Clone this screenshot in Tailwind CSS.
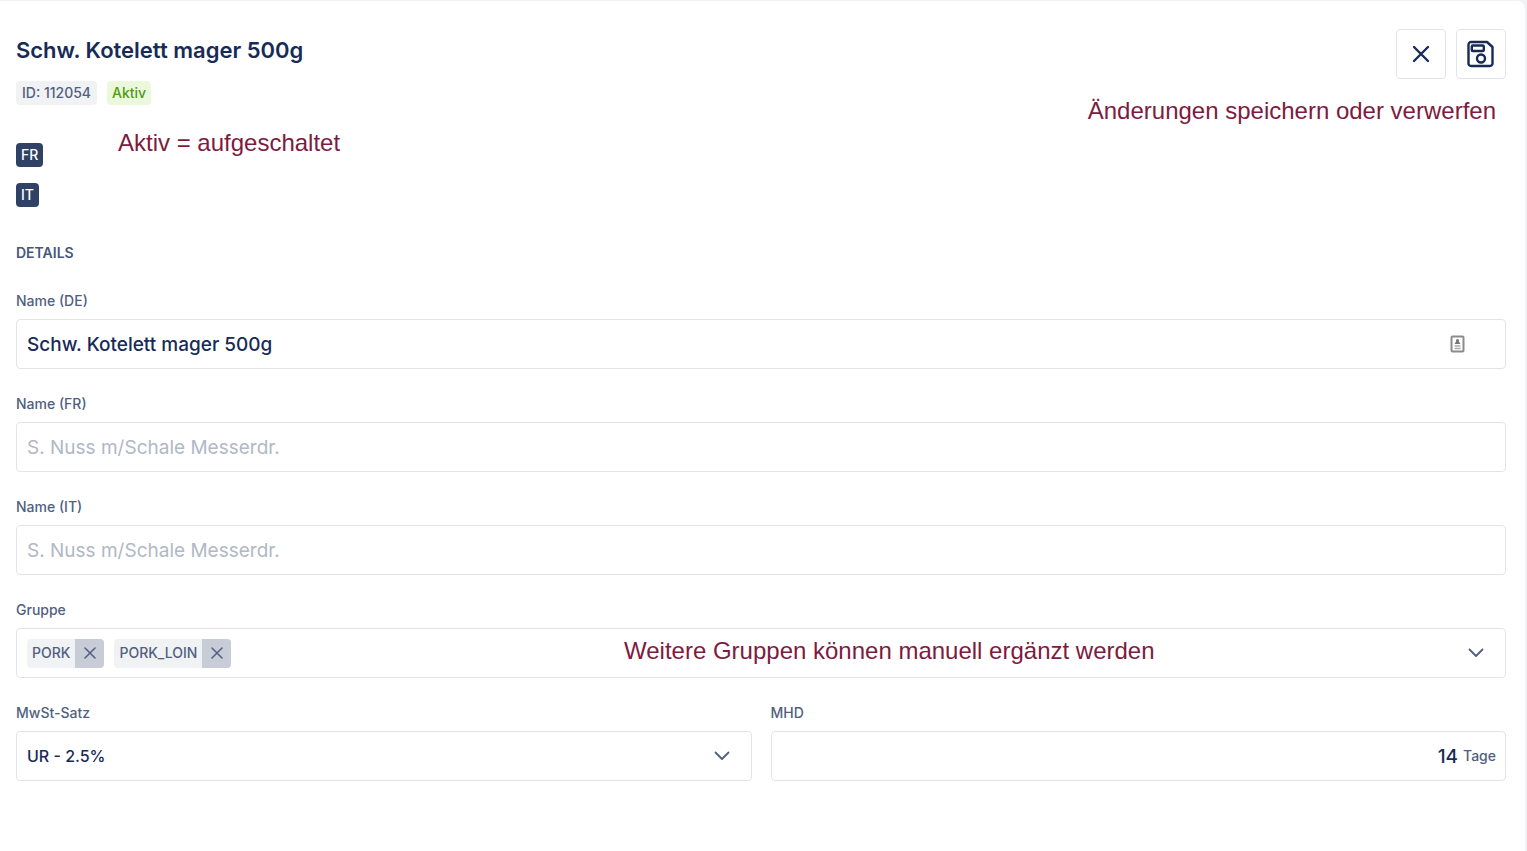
<!DOCTYPE html>
<html lang="de">
<head>
  <meta charset="UTF-8">
  <meta name="viewport" content="width=device-width, initial-scale=1.0">
  <title>Schw. Kotelett mager 500g</title>
  <script src="https://cdn.jsdelivr.net/npm/@tailwindcss/browser@4"></script>
</head>
<body class="bg-[#f1f2f4] font-['Inter',sans-serif] text-[#172b56]">
  <main class="min-h-screen bg-white mr-[2px] border-t border-[#f1f2f4] rounded-tr-lg pt-7 pb-16 pl-4 pr-[19px]">

    <header class="relative flex justify-between items-start">
      <div class="pt-2">
        <h1 class="text-[22px] leading-[26px] font-semibold">Schw. Kotelett mager 500g</h1>
        <div class="mt-[18px] flex gap-[10px] text-sm leading-6 font-medium text-[#505f7f]">
          <span class="bg-[#f1f2f4] rounded px-[6px]">ID: 112054</span>
          <span class="bg-[#ebf8dc] text-[#4f9a14] rounded px-[5px]">Aktiv</span>
        </div>
        <div class="mt-[38px] flex flex-col items-start gap-4 text-sm leading-6 font-medium text-white">
          <span class="bg-[#2f4266] rounded px-[5px]">FR</span>
          <span class="bg-[#2f4266] rounded px-[5px]">IT</span>
        </div>
      </div>
      <div class="flex gap-[10px]">
        <button type="button" aria-label="Verwerfen" class="size-[50px] flex items-center justify-center bg-white border border-[#e1e5eb] rounded">
          <svg class="size-[18px]" viewBox="0 0 18 18" fill="none" stroke="currentColor" stroke-width="2.4" stroke-linecap="round"><path d="M2 2l14 14M16 2L2 16"/></svg>
        </button>
        <button type="button" aria-label="Speichern" class="size-[50px] flex items-center justify-center bg-white border border-[#e1e5eb] rounded">
          <svg class="size-7" viewBox="0 0 28 28" fill="none" stroke="currentColor" stroke-width="2.4" stroke-linejoin="round"><path d="M4 2H20L25.500 7V23.500A2.500 2.500 0 0 1 23 26H4A2.500 2.500 0 0 1 1.500 23.500V4.500A2.500 2.500 0 0 1 4 2z"/><rect x="4.800" y="5.500" width="12" height="5.500" rx="1"/><circle cx="14" cy="18.500" r="4"/></svg>
        </button>
      </div>
      <p class="absolute left-[102px] top-[100px] font-['Liberation_Sans',sans-serif] text-2xl leading-7 text-[#7d1b40]">Aktiv = aufgeschaltet</p>
      <p class="absolute right-[10px] top-[68px] font-['Liberation_Sans',sans-serif] text-2xl leading-7 text-[#7d1b40]">Änderungen speichern oder verwerfen</p>
    </header>

    <form class="mt-9">
      <h2 class="text-sm leading-5 font-semibold text-[#465778]">DETAILS</h2>

      <div class="mt-7 flex flex-col gap-[25px]">
        <div class="flex flex-col gap-2">
          <label for="name-de" class="text-sm leading-5 font-medium text-[#505f7f]">Name (DE)</label>
          <div class="relative">
            <input id="name-de" type="text" value="Schw. Kotelett mager 500g" class="w-full h-[50px] border border-[#e1e5eb] rounded px-[10px] text-[19px] font-medium">
            <svg class="absolute right-[41px] top-4 w-[15px] h-[18px]" viewBox="0 0 15 18" fill="none"><rect x="1.500" y="1.500" width="12" height="15" rx="1" stroke="#8b8b8b" stroke-width="2"/><path d="M7.500 4a1.500 1.500 0 0 1 1.300 2.300L10.500 9h-6l1.700-2.700A1.500 1.500 0 0 1 7.500 4z" fill="#777"/><path d="M4.500 11h6M4.500 13.500h6" stroke="#aaa" stroke-width="1.300"/></svg>
          </div>
        </div>

        <div class="flex flex-col gap-2">
          <label for="name-fr" class="text-sm leading-5 font-medium text-[#505f7f]">Name (FR)</label>
          <input id="name-fr" type="text" placeholder="S. Nuss m/Schale Messerdr." class="w-full h-[50px] border border-[#e1e5eb] rounded px-[10px] text-[19px] placeholder:text-[#b1b8c5]">
        </div>

        <div class="flex flex-col gap-2">
          <label for="name-it" class="text-sm leading-5 font-medium text-[#505f7f]">Name (IT)</label>
          <input id="name-it" type="text" placeholder="S. Nuss m/Schale Messerdr." class="w-full h-[50px] border border-[#e1e5eb] rounded px-[10px] text-[19px] placeholder:text-[#b1b8c5]">
        </div>

        <div class="flex flex-col gap-2">
          <label for="gruppe" class="text-sm leading-5 font-medium text-[#505f7f]">Gruppe</label>
          <div class="relative flex items-center gap-[10px] h-[50px] border border-[#e1e5eb] rounded pl-[10px] pr-[21px] text-sm font-medium text-[#505f7f]">
            <span class="flex h-[29px] rounded overflow-hidden bg-[#f1f2f4] leading-7">
              <span class="px-[5px]">PORK</span>
              <button type="button" aria-label="PORK entfernen" class="w-[29px] flex items-center justify-center bg-[#c7ccd6]">
                <svg class="size-3" viewBox="0 0 12 12" fill="none" stroke="currentColor" stroke-width="1.500" stroke-linecap="round"><path d="M1 1l10 10M11 1L1 11"/></svg>
              </button>
            </span>
            <span class="flex h-[29px] rounded overflow-hidden bg-[#f1f2f4] leading-7">
              <span class="px-[5px]">PORK_LOIN</span>
              <button type="button" aria-label="PORK_LOIN entfernen" class="w-[29px] flex items-center justify-center bg-[#c7ccd6]">
                <svg class="size-3" viewBox="0 0 12 12" fill="none" stroke="currentColor" stroke-width="1.500" stroke-linecap="round"><path d="M1 1l10 10M11 1L1 11"/></svg>
              </button>
            </span>
            <input id="gruppe" type="text" class="flex-1 min-w-0 h-8 outline-none">
            <svg class="w-4 h-[10px]" viewBox="0 0 16 10" fill="none" stroke="currentColor" stroke-width="1.800" stroke-linecap="round" stroke-linejoin="round"><path d="M1.500 1.500L8 8l6.500-6.500"/></svg>
            <p class="absolute left-[607px] top-2 font-['Liberation_Sans',sans-serif] text-2xl leading-7 font-normal text-[#7d1b40]">Weitere Gruppen können manuell ergänzt werden</p>
          </div>
        </div>

        <div class="grid grid-cols-2 gap-[19px]">
          <div class="flex flex-col gap-2">
            <label for="mwst" class="text-sm leading-5 font-medium text-[#505f7f]">MwSt-Satz</label>
            <div class="relative">
              <select id="mwst" class="appearance-none w-full h-[50px] border border-[#e1e5eb] rounded px-[10px] text-base font-medium bg-white">
                <option>UR - 2.5%</option>
              </select>
              <svg class="absolute right-[22px] top-5 w-4 h-[10px] pointer-events-none text-[#505f7f]" viewBox="0 0 16 10" fill="none" stroke="currentColor" stroke-width="1.800" stroke-linecap="round" stroke-linejoin="round"><path d="M1.500 1.500L8 8l6.500-6.500"/></svg>
            </div>
          </div>
          <div class="flex flex-col gap-2">
            <label for="mhd" class="text-sm leading-5 font-medium text-[#505f7f]">MHD</label>
            <div class="flex items-center gap-[5px] h-[50px] border border-[#e1e5eb] rounded px-[9px]">
              <input id="mhd" type="text" value="14" class="flex-1 min-w-0 h-8 text-right text-[19px] font-medium outline-none">
              <span class="text-sm font-medium text-[#505f7f]">Tage</span>
            </div>
          </div>
        </div>
      </div>
    </form>
  </main>
</body>
</html>
